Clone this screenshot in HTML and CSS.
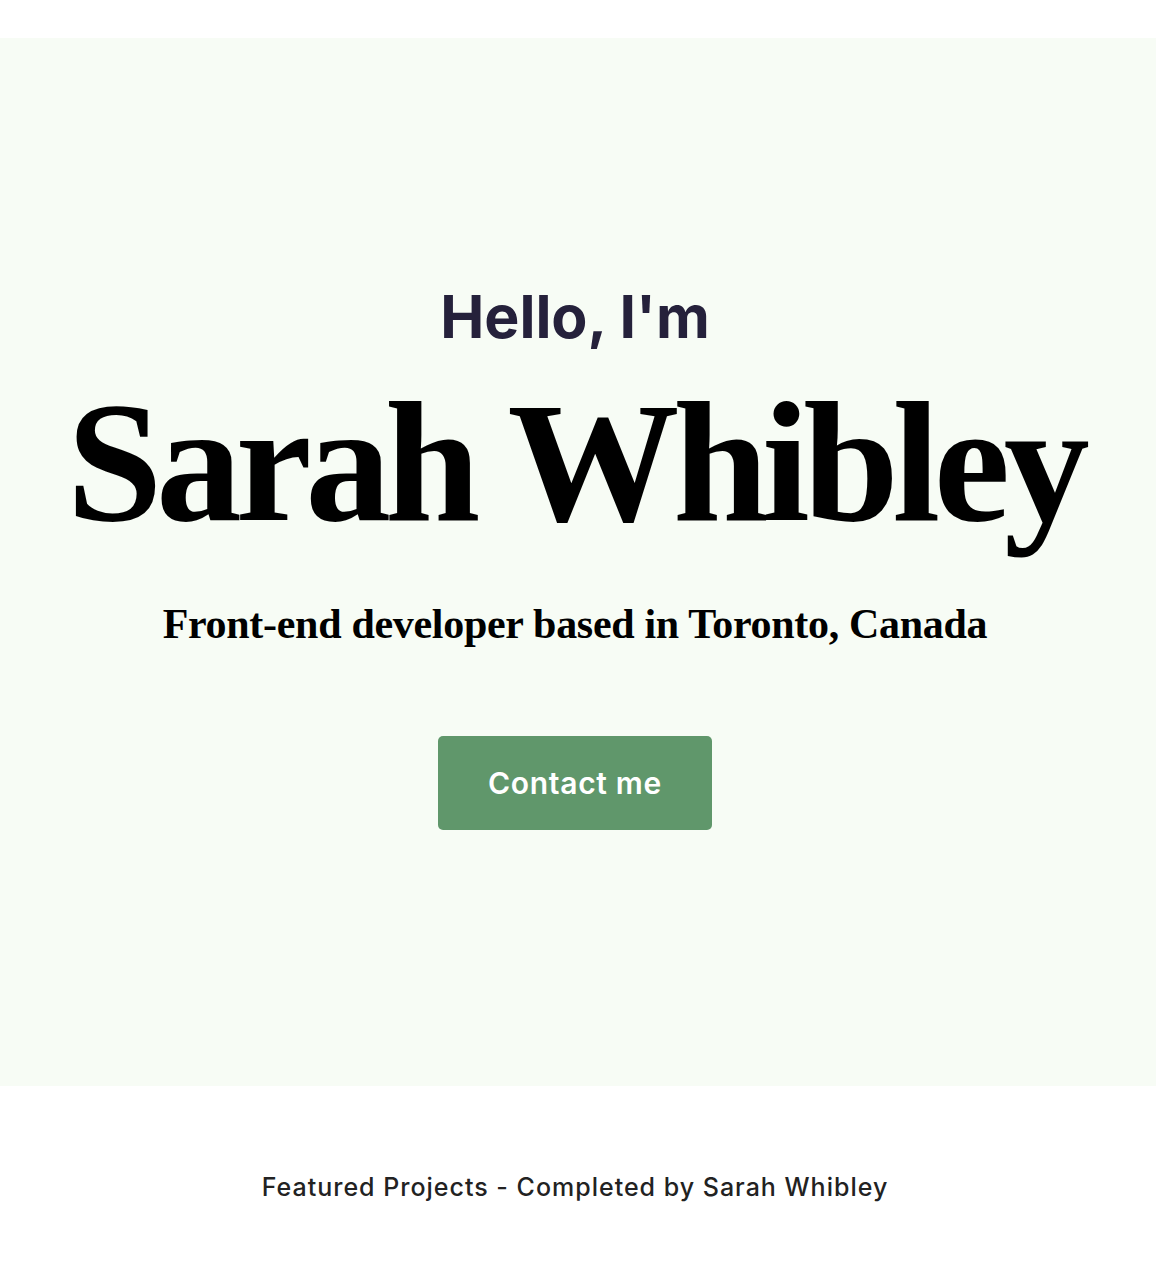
FILE: index.html
```html
<!DOCTYPE html>
<html lang="en">
<head>
<meta charset="utf-8">
<title>Sarah Whibley</title>
<link rel="stylesheet" href="styles.css">
</head>
<body>
<header class="top"></header>
<main class="hero">
  <h2 class="hello">Hello, I'm</h2>
  <h1 class="name">Sarah Whibley</h1>
  <p class="tagline">Front-end developer based in Toronto, Canada</p>
  <a class="btn" href="#">Contact me</a>
</main>
<footer class="foot">
  <p class="foot-text">Featured Projects - Completed by Sarah Whibley</p>
</footer>
</body>
</html>
```
FILE: styles.css
```css
* { box-sizing: border-box; }
html, body { margin: 0; padding: 0; background: #ffffff; }
body { font-family: "Inter", "Open Sans", sans-serif; }
.top { height: 38px; }
.hero {
  height: 1048px;
  background: #f7fcf5;
  display: flex;
  flex-direction: column;
  align-items: center;
  padding: 243px 6px 0 0;
  text-align: center;
}
.hello {
  margin: 0;
  font-family: "Inter", sans-serif;
  font-weight: 700;
  font-size: 59px;
  line-height: 72px;
  color: #25213b;
}
.name {
  margin: 23px 0 0;
  font-family: "Liberation Serif", serif;
  font-weight: 700;
  font-size: 172px;
  line-height: 172px;
  letter-spacing: -6.5px;
  color: #000;
}
.tagline {
  margin: 48px 0 0;
  font-family: "Liberation Serif", serif;
  font-weight: 700;
  font-size: 42px;
  line-height: 56px;
  letter-spacing: -0.3px;
  color: #000;
}
.btn {
  margin-top: 84px;
  width: 274px;
  height: 94px;
  display: flex;
  align-items: center;
  justify-content: center;
  background: #60976b;
  color: #fff;
  border-radius: 5px;
  text-decoration: none;
  font-family: "Inter", sans-serif;
  font-weight: 600;
  font-size: 30px;
  letter-spacing: 0.7px;
}
.foot {
  padding: 85px 6px 0 0;
  text-align: center;
}
.foot-text {
  margin: 0;
  font-family: "Inter", sans-serif;
  font-weight: 500;
  font-size: 25px;
  line-height: 32px;
  letter-spacing: 1px;
  color: #222222;
}
```
